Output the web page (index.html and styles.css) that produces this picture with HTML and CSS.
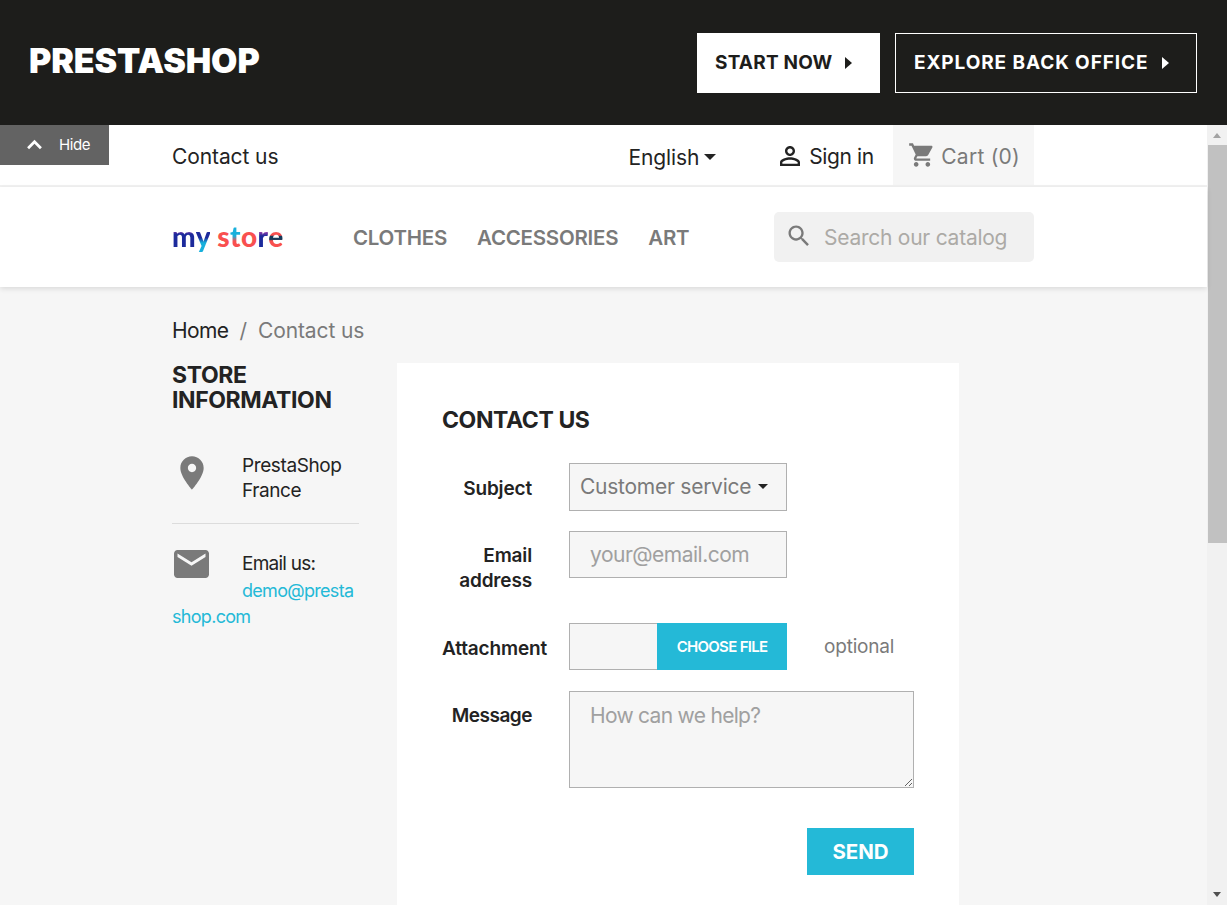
FILE: index.html
```html
<!DOCTYPE html>
<html>
<head>
    <title>Contact us - my store</title>
    <link rel="stylesheet" href="styles.css">
</head>
<body>
    <div class="banner">
        <div class="banner-title">PRESTASHOP</div>
        <div class="banner-actions">
            <a class="banner-btn banner-btn-light">START NOW <span class="tri"></span></a>
            <a class="banner-btn banner-btn-dark">EXPLORE BACK OFFICE <span class="tri"></span></a>
        </div>
    </div>

    <div class="frame">
        <a class="hide-tab">
            <svg class="hide-chevron" viewBox="0 0 18 12"><path d="M2 10l7-7 7 7" fill="none" stroke="#fff" stroke-width="3"/></svg>
            Hide
        </a>

        <div class="shop">
            <div class="nav-top">
                <div class="container nav-top-row">
                    <a class="nav-contact">Contact us</a>
                    <div class="lang">English<span class="caret"></span></div>
                    <a class="signin">
                        <svg class="icon-user" viewBox="0 0 24 24"><path d="M12 5.9c1.16 0 2.1.94 2.1 2.1s-.94 2.1-2.1 2.1S9.9 9.16 9.9 8s.94-2.1 2.1-2.1m0 9c2.97 0 6.1 1.46 6.1 2.1v1.1H5.9V17c0-.64 3.13-2.1 6.1-2.1M12 4C9.79 4 8 5.79 8 8s1.79 4 4 4 4-1.79 4-4-1.79-4-4-4zm0 9c-2.67 0-8 1.34-8 4v3h16v-3c0-2.66-5.33-4-8-4z"/></svg>
                        Sign in
                    </a>
                    <a class="cart">
                        <svg class="icon-cart" viewBox="0 0 24 24"><path d="M7 18c-1.1 0-1.99.9-1.99 2S5.9 22 7 22s2-.9 2-2-.9-2-2-2zM1 2v2h2l3.6 7.59-1.35 2.45c-.16.28-.25.61-.25.96 0 1.1.9 2 2 2h12v-2H7.42c-.14 0-.25-.11-.25-.25l.03-.12.9-1.63h7.45c.75 0 1.41-.41 1.75-1.03l3.58-6.49c.08-.14.12-.31.12-.48 0-.55-.45-1-1-1H5.21l-.94-2H1zm16 16c-1.1 0-1.99.9-1.99 2s.89 2 1.99 2 2-.9 2-2-.9-2-2-2z"/></svg>
                        Cart (0)
                    </a>
                </div>
            </div>

            <div class="nav-main">
                <div class="container nav-main-row">
                    <a class="logo"><span class="l-m">m</span><span class="l-y">y</span> <span class="l-red">s</span><span class="l-t">t</span><span class="l-red">o</span><span class="l-r">r</span><span class="l-e">e</span></a>
                    <ul class="menu">
                        <li>CLOTHES</li>
                        <li>ACCESSORIES</li>
                        <li>ART</li>
                    </ul>
                    <div class="search">
                        <svg class="icon-search" viewBox="0 0 24 24"><path d="M15.5 14h-.79l-.28-.27C15.41 12.59 16 11.11 16 9.5 16 5.91 13.09 3 9.5 3S3 5.91 3 9.5 5.91 16 9.5 16c1.61 0 3.09-.59 4.23-1.57l.27.28v.79l5 4.99L20.49 19l-4.99-5zm-6 0C7.01 14 5 11.99 5 9.5S7.01 5 9.5 5 14 7.01 14 9.5 11.99 14 9.5 14z"/></svg>
                        <span class="search-text">Search our catalog</span>
                    </div>
                </div>
            </div>

            <div class="container">
                <div class="breadcrumb"><a class="crumb-link">Home</a><span class="crumb-sep">/</span><span>Contact us</span></div>

                <div class="columns">
                    <div class="sidebar">
                        <h2 class="store-title">STORE<br>INFORMATION</h2>
                        <div class="info-block">
                            <svg class="icon-place" viewBox="0 0 24 24"><path d="M12 2C8.13 2 5 5.13 5 9c0 5.25 7 13 7 13s7-7.75 7-13c0-3.87-3.13-7-7-7zm0 9.5c-1.38 0-2.5-1.12-2.5-2.5s1.12-2.5 2.5-2.5 2.5 1.12 2.5 2.5-1.12 2.5-2.5 2.5z"/></svg>
                            <div>PrestaShop<br>France</div>
                        </div>
                        <div class="info-sep"></div>
                        <div class="info-email">
                            <svg class="icon-mail" viewBox="2 4 20 16"><path d="M20 4H4c-1.1 0-1.99.9-1.99 2L2 18c0 1.1.9 2 2 2h16c1.1 0 2-.9 2-2V6c0-1.1-.9-2-2-2zm0 4l-8 5-8-5V6l8 5 8-5v2z"/></svg>
                            Email us:<br>
                            <a class="mail-link">demo@presta<br>shop.com</a>
                        </div>
                    </div>

                    <div class="card">
                        <h1 class="card-title">CONTACT US</h1>

                        <div class="form-row row-subject">
                            <label class="form-label">Subject</label>
                            <div class="field select-field">Customer service<span class="caret caret-small"></span></div>
                        </div>
                        <div class="form-row row-email">
                            <label class="form-label">Email address</label>
                            <div class="field placeholder">your@email.com</div>
                        </div>
                        <div class="form-row row-file">
                            <label class="form-label">Attachment</label>
                            <div class="file-box">
                                <div class="file-empty"></div>
                                <div class="file-btn">CHOOSE FILE</div>
                            </div>
                            <span class="optional">optional</span>
                        </div>
                        <div class="form-row row-message">
                            <label class="form-label">Message</label>
                            <textarea class="message" placeholder="How can we help?"></textarea>
                        </div>
                        <div class="send-row"><a class="send-btn">SEND</a></div>
                    </div>
                </div>
            </div>
        </div>

        <div class="scrollbar">
            <div class="scroll-up"></div>
            <div class="scroll-thumb"></div>
            <div class="scroll-down"></div>
        </div>
    </div>
</body>
</html>
```

FILE: styles.css
```css
* {
    box-sizing: border-box;
}
body {
    margin: 0;
    padding: 0;
    height: 905px;
    overflow: hidden;
    font-family: Inter, "Noto Sans", sans-serif;
    color: #232323;
    background-color: #f6f6f6;
}
a {
    text-decoration: none;
}

/* black demo banner */
.banner {
    height: 125px;
    background-color: #1d1d1b;
    display: flex;
    align-items: center;
    justify-content: space-between;
    padding: 0 30px 0 29px;
}
.banner-title {
    color: #fff;
    font-size: 34px;
    font-weight: 900;
    letter-spacing: -0.1px;
    margin-top: -4px;
}
.banner-actions {
    display: flex;
    gap: 15px;
}
.banner-btn {
    height: 60px;
    display: flex;
    align-items: center;
    font-size: 19px;
    font-weight: 700;
    white-space: pre;
}
.banner-btn-light {
    width: 183px;
    padding-left: 18px;
    background-color: #fff;
    color: #1d1d1b;
    letter-spacing: 0.2px;
}
.banner-btn-dark {
    width: 302px;
    padding-left: 18px;
    border: 1px solid #fff;
    color: #fff;
    letter-spacing: 0.9px;
}
.tri {
    width: 0;
    height: 0;
    margin-left: 8px;
    border-left: 7px solid currentColor;
    border-top: 6.5px solid transparent;
    border-bottom: 6.5px solid transparent;
}

/* everything under the banner */
.frame {
    position: relative;
    height: 780px;
    display: flex;
    overflow: hidden;
}
.shop {
    flex: 1;
    min-width: 0;
}
.hide-tab {
    position: absolute;
    left: 0;
    top: 0;
    width: 109px;
    height: 40px;
    background-color: #636363;
    color: #fff;
    font-size: 15px;
    display: flex;
    align-items: center;
    padding-left: 26px;
    padding-bottom: 1px;
    font-family: Inter, sans-serif;
    letter-spacing: -0.4px;
}
.hide-chevron {
    width: 17px;
    height: 11px;
    margin-right: 16px;
}
.container {
    width: 862px;
    margin-left: 172px;
}

/* top row */
.nav-top {
    height: 62px;
    background-color: #fff;
    border-bottom: 2px solid #f1f1f1;
}
.nav-top-row {
    height: 60px;
    display: flex;
    align-items: center;
    font-size: 21px;
    letter-spacing: -0.1px;
    padding-top: 2px;
}
.nav-contact {
    color: #232323;
    margin-right: 350px;
}
.lang {
    color: #232323;
    display: flex;
    align-items: center;
    margin-right: 62px;
    position: relative;
    top: 1px;
}
.caret {
    width: 0;
    height: 0;
    margin-left: 5px;
    border-top: 6px solid currentColor;
    border-left: 6px solid transparent;
    border-right: 6px solid transparent;
}
.signin {
    color: #232323;
    display: flex;
    align-items: center;
    width: 115px;
    letter-spacing: -0.4px;
}
.icon-user {
    width: 30px;
    height: 30px;
    fill: #232323;
    margin-right: 4px;
    margin-left: -3px;
}
.cart {
    flex: 1;
    height: 60px;
    margin-top: -2px;
    padding-top: 2px;
    background-color: #f6f6f6;
    color: #7a7a7a;
    display: flex;
    align-items: center;
    padding-left: 15px;
    letter-spacing: 0.25px;
}
.icon-cart {
    width: 28px;
    height: 28px;
    fill: #7a7a7a;
    margin-right: 5px;
    margin-top: -3px;
}

/* logo, menu, search */
.nav-main {
    height: 100px;
    background-color: #fff;
    box-shadow: 0 2px 5px rgba(0, 0, 0, 0.11);
    position: relative;
}
.nav-main-row {
    height: 100px;
    display: flex;
    align-items: center;
}
.logo {
    width: 181px;
    font-family: Lato, sans-serif;
    font-size: 28px;
    font-weight: 900;
    letter-spacing: 0.4px;
    margin-top: -3px;
}
.logo span {
    -webkit-background-clip: text;
    background-clip: text;
}
.l-m {
    color: transparent;
    background-image: linear-gradient(#17b0dc, #b03fae 30%, #1c2a9c 45%);
}
.l-y {
    color: transparent;
    background-image: linear-gradient(#1c2a9c 55%, #17b0dc 70%);
}
.l-red {
    color: #f9504f;
}
.l-t {
    color: transparent;
    background-image: linear-gradient(#17b0dc 50%, #f9504f 65%);
}
.l-r {
    color: transparent;
    background-image: linear-gradient(#b03fae 35%, #1c2a9c 50%);
}
.l-e {
    color: transparent;
    background-image: linear-gradient(#f9504f 48%, #173a5a 50%, #173a5a 60%, #f9504f 64%);
}
.menu {
    list-style: none;
    margin: 0;
    padding: 0;
    width: 421px;
    display: flex;
    gap: 30px;
    font-size: 20.5px;
    font-weight: 600;
    letter-spacing: -0.25px;
    color: #7a7a7a;
}
.search {
    width: 260px;
    height: 50px;
    background-color: #f1f1f1;
    border-radius: 5px;
    display: flex;
    align-items: center;
    padding-left: 11px;
}
.icon-search {
    width: 28px;
    height: 28px;
    fill: #7a7a7a;
    margin-right: 11px;
    margin-top: -2px;
}
.search-text {
    font-size: 21px;
    letter-spacing: -0.25px;
    color: #acaaa6;
}

/* page body */
.breadcrumb {
    height: 76px;
    padding-top: 31px;
    font-size: 21px;
    letter-spacing: -0.1px;
    color: #7a7a7a;
}
.crumb-link {
    color: #232323;
    letter-spacing: -0.6px;
}
.crumb-sep {
    margin: 0 11px;
}
.columns {
    display: flex;
    align-items: flex-start;
}
.sidebar {
    width: 187px;
    margin-right: 38px;
    font-size: 19px;
    line-height: 25px;
    letter-spacing: -0.4px;
}
.store-title {
    margin: 0;
    font-size: 23px;
    line-height: 25px;
    font-weight: 700;
    letter-spacing: -0.4px;
    color: #232323;
}
.info-block {
    display: flex;
    margin-top: 40px;
    height: 70px;
}
.icon-place {
    width: 40px;
    height: 40px;
    fill: #7a7a7a;
    margin-right: 30px;
}
.info-sep {
    border-top: 1px solid #dcdcdc;
}
.info-email {
    padding-top: 27px;
    line-height: 26.5px;
    letter-spacing: -0.75px;
}
.icon-mail {
    float: left;
    width: 35px;
    height: 28px;
    fill: #7a7a7a;
    margin: -1px 33px 26px 2px;
}
.mail-link {
    color: #24b9d7;
    font-size: 18px;
    letter-spacing: -0.7px;
}
.card {
    width: 562px;
    height: 600px;
    background-color: #fff;
    padding: 45px;
}
.card-title {
    margin: 0 0 30px 0;
    font-size: 23px;
    line-height: 25px;
    font-weight: 700;
    letter-spacing: -0.4px;
    color: #232323;
}

/* contact form */
.form-row {
    display: flex;
    align-items: flex-start;
}
.form-label {
    width: 90px;
    flex: none;
    margin-right: 37px;
    text-align: right;
    font-size: 19px;
    line-height: 25px;
    font-weight: 600;
    letter-spacing: -0.15px;
    color: #232323;
    padding-top: 13px;
}
.row-subject {
    height: 68px;
}
.row-email {
    height: 92px;
}
.row-email .form-label {
    padding-top: 12px;
}
.row-file {
    height: 68px;
}
.row-file .form-label {
    white-space: nowrap;
}
.row-message {
    height: 137px;
}
.row-message .form-label {
    padding-top: 12px;
    letter-spacing: -0.5px;
}
.field {
    width: 218px;
    height: 48px;
    background-color: #f6f6f6;
    border: 1px solid #b0b0b0;
    display: flex;
    align-items: center;
    font-size: 21px;
    letter-spacing: -0.25px;
    color: #7a7a7a;
    padding: 0 0 2px 10px;
}
.caret-small {
    margin-left: 7px;
    color: #232323;
    border-top-width: 5px;
    border-left-width: 5px;
    border-right-width: 5px;
}
.placeholder {
    height: 47px;
    padding-left: 20px;
    padding-bottom: 0;
    letter-spacing: -0.5px;
    color: #a0a0a0;
}
.file-box {
    width: 218px;
    height: 47px;
    display: flex;
}
.file-empty {
    width: 88px;
    background-color: #f6f6f6;
    border: 1px solid #b0b0b0;
    border-right: none;
}
.file-btn {
    flex: 1;
    background-color: #24b9d7;
    color: #fff;
    font-size: 15px;
    font-weight: 600;
    letter-spacing: -0.7px;
    display: flex;
    align-items: center;
    justify-content: center;
}
.optional {
    margin-left: 37px;
    font-size: 19px;
    letter-spacing: -0.2px;
    line-height: 47px;
    color: #7a7a7a;
}
.message {
    width: 345px;
    height: 97px;
    background-color: #f6f6f6;
    border: 1px solid #b0b0b0;
    border-radius: 0;
    font-family: Inter, "Noto Sans", sans-serif;
    font-size: 21px;
    letter-spacing: -0.7px;
    padding: 11px 20px;
    margin: 0;
    outline: none;
}
.message::placeholder {
    color: #a0a0a0;
    opacity: 1;
}
.send-row {
    width: 472px;
    display: flex;
    justify-content: flex-end;
}
.send-btn {
    width: 107px;
    height: 47px;
    background-color: #24b9d7;
    color: #fff;
    font-size: 20.5px;
    font-weight: 700;
    letter-spacing: -0.1px;
    display: flex;
    align-items: center;
    justify-content: center;
}

/* fake scrollbar of the inner page */
.scrollbar {
    width: 20px;
    flex: none;
    background-color: #f1f1f1;
    display: flex;
    flex-direction: column;
    padding-left: 1px;
}
.scroll-up {
    height: 20px;
    position: relative;
}
.scroll-up::after {
    content: "";
    position: absolute;
    left: 5px;
    top: 8px;
    border-left: 4px solid transparent;
    border-right: 4px solid transparent;
    border-bottom: 5px solid #a3a3a3;
}
.scroll-thumb {
    height: 398px;
    background-color: #c1c1c1;
}
.scroll-down {
    margin-top: auto;
    height: 20px;
    position: relative;
}
.scroll-down::after {
    content: "";
    position: absolute;
    left: 5px;
    top: 7px;
    border-left: 4px solid transparent;
    border-right: 4px solid transparent;
    border-top: 5px solid #505050;
}
```
